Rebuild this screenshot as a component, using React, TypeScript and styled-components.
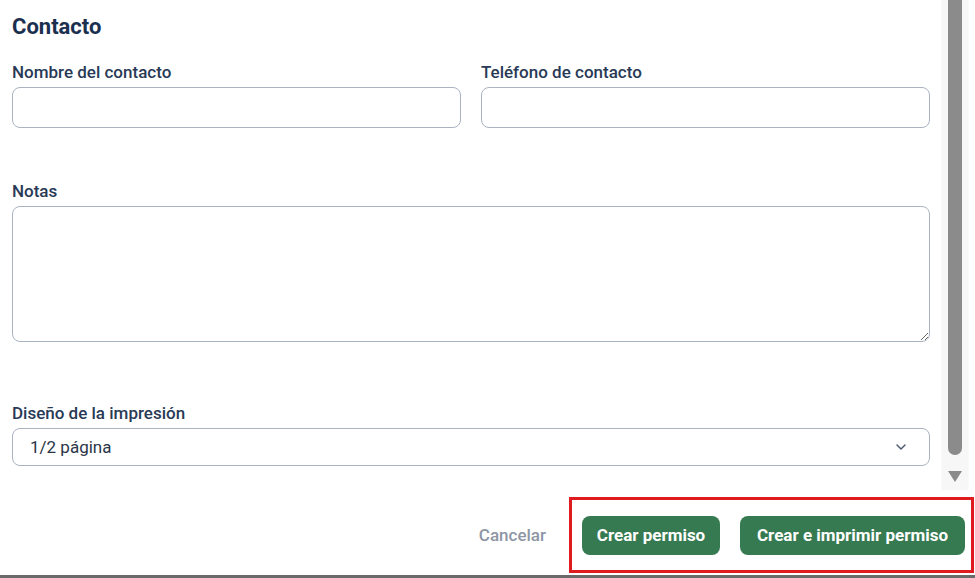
import React from "react";
import styled, { createGlobalStyle } from "styled-components";
import { ChevronDown } from "lucide-react";

const GlobalStyle = createGlobalStyle`
  html, body {
    margin: 0;
    padding: 0;
    background: #fff;
    font-family: Roboto, "Noto Sans", "Liberation Sans", sans-serif;
  }
  * { box-sizing: border-box; }
`;

const Page = styled.div`
  width: 975px;
  height: 578px;
  display: flex;
  flex-direction: column;
  overflow: hidden;
`;

const Body = styled.div`
  display: flex;
  height: 490px;
`;

const Form = styled.div`
  width: 941px;
  padding: 14px 11px 0 12px;
  display: flex;
  flex-direction: column;
`;

const Heading = styled.h2`
  margin: 0;
  font-size: 22px;
  line-height: 26px;
  font-weight: 700;
  color: #1b2f4f;
`;

const Row = styled.div<{ $top: number }>`
  display: grid;
  grid-template-columns: 1fr 1fr;
  column-gap: 20px;
  margin-top: ${({ $top }) => $top}px;
`;

const Field = styled.div<{ $top?: number }>`
  display: flex;
  flex-direction: column;
  gap: 5px;
  margin-top: ${({ $top }) => $top ?? 0}px;
`;

const Label = styled.label`
  font-size: 17px;
  line-height: 20px;
  font-weight: 500;
  color: #293a56;
`;

const Input = styled.input`
  height: 41px;
  border: 1.5px solid #a9b3c1;
  border-radius: 8px;
  background: #fff;
  font: inherit;
  padding: 0 14px;
  outline: none;
`;

const TextArea = styled.textarea`
  height: 136px;
  border: 1.5px solid #a9b3c1;
  border-radius: 8px;
  background: #fff;
  font: inherit;
  padding: 10px 14px;
  resize: vertical;
  outline: none;
`;

const Select = styled.div`
  height: 38px;
  flex-shrink: 0;
  border: 1.5px solid #a9b3c1;
  border-radius: 8px;
  display: flex;
  align-items: center;
  justify-content: space-between;
  padding: 0 20px 0 17px;
  font-size: 17px;
  color: #2b3548;
`;

const Scrollbar = styled.div`
  width: 31px;
  display: flex;
  flex-direction: column;
  align-items: center;
  padding: 0 8px 0 4px;
  background: linear-gradient(to right, #fff 0, #f7f7f7 1px, #f7f7f7 27px, #fff 28px);
`;

const Thumb = styled.div`
  width: 14px;
  height: 455px;
  background: #8b8b8b;
  border-radius: 0 0 7px 7px;
`;

const Arrow = styled.div`
  margin-top: 16px;
  width: 0;
  height: 0;
  border-left: 7px solid transparent;
  border-right: 7px solid transparent;
  border-top: 11px solid #8b8b8b;
`;

const Footer = styled.div`
  height: 85px;
  display: flex;
  justify-content: flex-end;
  align-items: flex-start;
  padding: 7px 1px 0 0;
  gap: 23px;
`;

const Cancel = styled.button`
  height: 76px;
  border: none;
  background: none;
  font-family: inherit;
  font-size: 17px;
  font-weight: 500;
  color: #8d96a4;
  padding: 0;
`;

const Highlight = styled.div`
  height: 76px;
  border: 3px solid #e01b1f;
  display: flex;
  align-items: center;
  gap: 20px;
  padding: 0 6px 0 10px;
`;

const Primary = styled.button<{ $w: number }>`
  width: ${({ $w }) => $w}px;
  height: 39px;
  border: none;
  border-radius: 8px;
  background: #367a51;
  color: #fff;
  font-family: inherit;
  font-size: 17px;
  font-weight: 700;
`;

const BottomLine = styled.div`
  height: 3px;
  background: #6a6a6a;
`;

export default function App() {
  return (
    <Page>
      <GlobalStyle />
      <Body>
        <Form>
          <Heading>Contacto</Heading>
          <Row $top={22}>
            <Field>
              <Label>Nombre del contacto</Label>
              <Input />
            </Field>
            <Field>
              <Label>Teléfono de contacto</Label>
              <Input />
            </Field>
          </Row>
          <Field $top={53}>
            <Label>Notas</Label>
            <TextArea />
          </Field>
          <Field $top={61}>
            <Label>Diseño de la impresión</Label>
            <Select>
              <span>1/2 página</span>
              <ChevronDown size={16} color="#4b5a70" strokeWidth={2.2} />
            </Select>
          </Field>
        </Form>
        <Scrollbar>
          <Thumb />
          <Arrow />
        </Scrollbar>
      </Body>
      <Footer>
        <Cancel>Cancelar</Cancel>
        <Highlight>
          <Primary $w={138}>Crear permiso</Primary>
          <Primary $w={225}>Crear e imprimir permiso</Primary>
        </Highlight>
      </Footer>
      <BottomLine />
    </Page>
  );
}
